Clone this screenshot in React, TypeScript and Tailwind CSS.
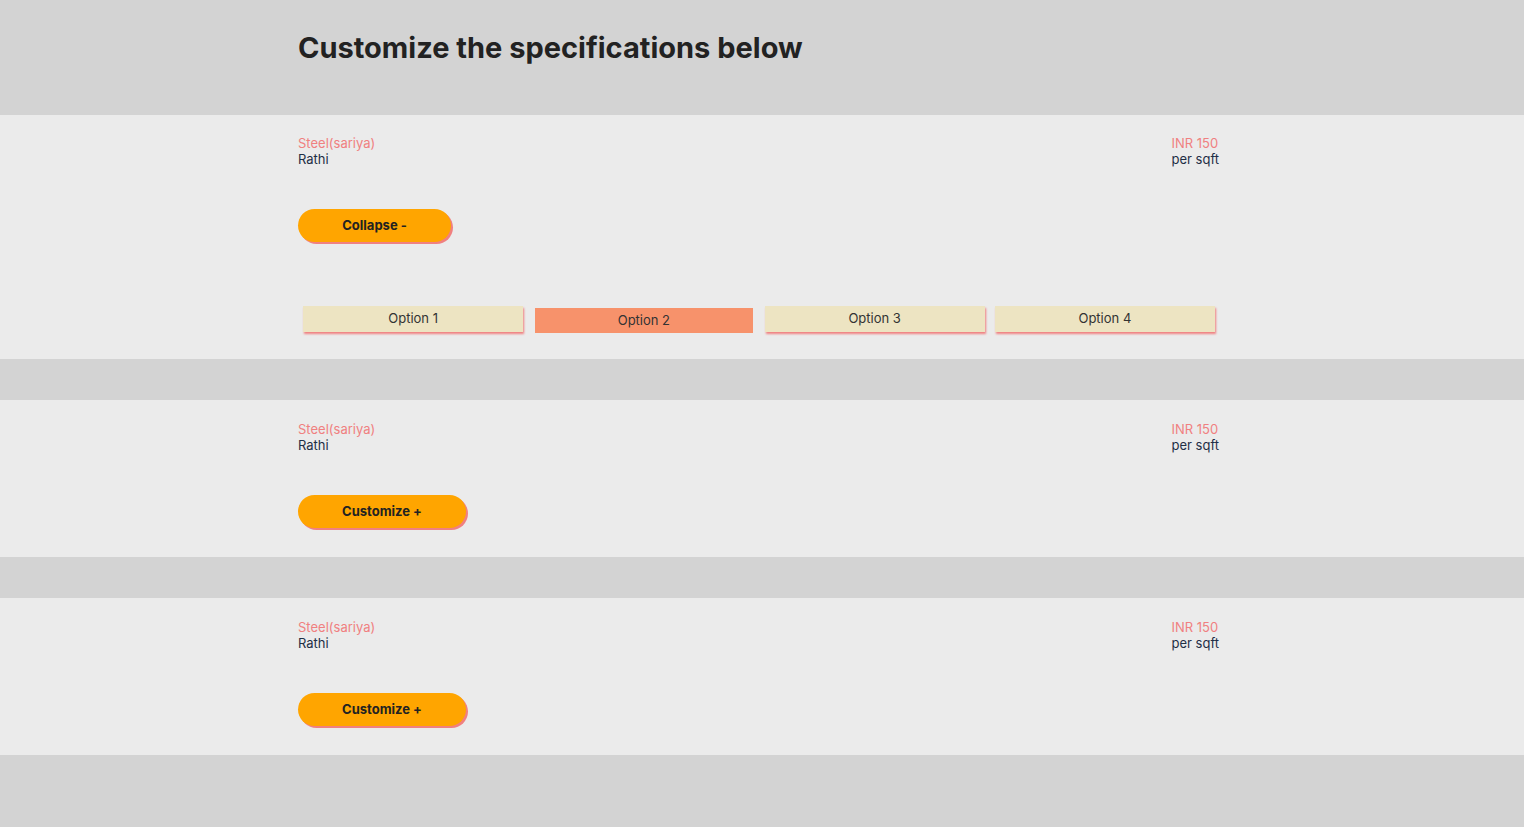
import React, { useState } from 'react';

const options = ['Option 1', 'Option 2', 'Option 3', 'Option 4'];

function SpecCard({ defaultOpen = false }: { defaultOpen?: boolean }) {
  const [open, setOpen] = useState(defaultOpen);
  const [selected, setSelected] = useState(1);

  return (
    <div className="bg-[#ebebeb]">
      <div className={`mx-auto w-[928px] pr-[7px] pb-[29px] ${open ? 'pt-[20px]' : 'pt-[21px]'}`}>
        <div className="flex justify-between text-[13px] leading-[16px]">
          <div>
            <div className="text-[#f08080]">Steel(sariya)</div>
            <div className="text-[#1f2f46]">Rathi</div>
          </div>
          <div>
            <div className="text-[#f08080]">INR 150</div>
            <div className="text-[#1f2f46]">per sqft</div>
          </div>
        </div>

        <button
          type="button"
          onClick={() => setOpen(!open)}
          className={`mt-[42px] h-[33px] rounded-full bg-[#ffa500] text-[13px] font-bold text-[#222] shadow-[2px_2px_0_#f08080] ${
            open ? 'w-[153px]' : 'w-[168px]'
          }`}
        >
          {open ? 'Collapse -' : 'Customize +'}
        </button>

        {open && (
          <div className="mt-[64px] -mb-[3px] flex gap-[10px] pl-[5px] pr-[4px]">
            {options.map((opt, i) => (
              <button
                key={opt}
                type="button"
                onClick={() => setSelected(i)}
                className={
                  i === selected
                    ? 'mt-[2px] h-[25px] w-[218px] bg-[#f7926b] text-[13px] text-[#333] mx-[2px]'
                    : 'h-[26px] w-[221px] bg-[#ede4c2] text-[13px] text-[#333] shadow-[1px_2px_2px_#f08080]'
                }
              >
                {opt}
              </button>
            ))}
          </div>
        )}
      </div>
    </div>
  );
}

export default function App() {
  return (
    <div className="min-h-[827px] bg-[#d3d3d3] pb-[72px] font-['Inter',sans-serif]">
      <div className="mx-auto flex h-[115px] w-[928px] items-start pt-[28px]">
        <h1 className="text-[29px] font-bold leading-[40px] text-[#222]">
          Customize the specifications below
        </h1>
      </div>
      <div className="flex flex-col gap-[41px]">
        <SpecCard defaultOpen />
        <SpecCard />
        <SpecCard />
      </div>
    </div>
  );
}
